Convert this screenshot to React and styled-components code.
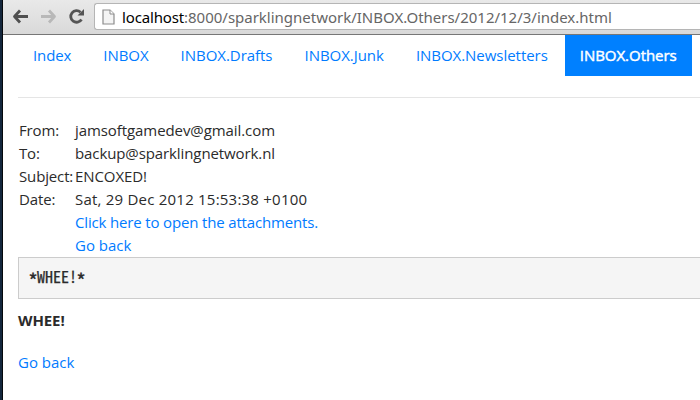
import React from "react";
import styled, { createGlobalStyle } from "styled-components";

const GlobalStyle = createGlobalStyle`
  * { box-sizing: border-box; }
  body { margin: 0; overflow: hidden; background: #fff; }
`;

const Window = styled.div`
  width: 700px;
  height: 400px;
  overflow: hidden;
  border-left: 2px solid #14263c;
  box-shadow: inset 1px 0 #05080c;
  padding-left: 1px;
  font: 15px/23px "Open Sans", sans-serif;
  color: #2b2b2b;
  background: #fff;
`;

const Toolbar = styled.header`
  display: flex;
  align-items: flex-start;
  height: 35px;
  padding: 3px 0 0 9px;
  border-bottom: 1px solid #777;
  background: linear-gradient(#e9e9e9, #d9d9d9);
`;

const ToolIcon = styled.svg`
  flex: none;
  width: 18px;
  height: 18px;
  margin: 4px 10px 0 0;
  fill: none;
  stroke: ${(p) => p.$color};
  stroke-width: 2.8;
  stroke-linejoin: round;
`;

const AddressBar = styled.div`
  display: flex;
  align-items: center;
  flex: 1;
  height: 27px;
  margin-left: -2px;
  padding-left: 7px;
  border: 1px solid #b5b5b5;
  border-right: 0;
  border-radius: 3px 0 0 3px;
  background: #fff;
`;

const PageIcon = styled.svg`
  flex: none;
  width: 13px;
  height: 16px;
  margin-right: 7px;
`;

const Url = styled.span`
  font: 15px/24px "Noto Sans", sans-serif;
  letter-spacing: ${(p) => p.$spacing};
  color: ${(p) => p.$color};
  white-space: nowrap;
`;

const Content = styled.main`
  padding-left: 15px;
`;

const Nav = styled.nav`
  display: flex;
  gap: 2px;
  height: 63px;
  border-bottom: 1px solid #e5e5e5;
`;

const NavLink = styled.a`
  height: 41px;
  padding: 0 15px;
  line-height: 41px;
  letter-spacing: -0.037px;
  white-space: nowrap;
  color: ${(p) => (p.$active ? "#fff" : "#007bff")};
  background: ${(p) => (p.$active ? "#0080ff" : "transparent")};
  -webkit-text-stroke: ${(p) => (p.$active ? "0.45px #fff" : "0")};

  &:first-child {
    letter-spacing: -0.12px;
  }
`;

const Headers = styled.div`
  display: grid;
  grid-template-columns: 56px 1fr;
  grid-auto-rows: 23px;
  padding: 21px 0 0 1px;
  white-space: nowrap;
`;

const Field = styled.span`
  letter-spacing: ${(p) => p.$spacing || "-0.14px"};
`;

const Link = styled.a`
  color: #007bff;
  grid-column: 2;
  letter-spacing: ${(p) => p.$spacing || "0"};
`;

const Message = styled.pre`
  height: 42px;
  margin: 0;
  padding: 0 10px;
  border: 1px solid #ccc;
  border-right: 0;
  background: #f5f5f5;
  font: 16px/37px "Noto Sans Mono CJK JP", "Liberation Mono", monospace;
  -webkit-text-stroke: 0.25px #2b2b2b;
`;

const Asterisk = styled.span`
  display: inline-block;
  transform: translateY(4px) scale(1.2);
  -webkit-text-stroke: 0.4px #2b2b2b;
`;

const Footer = styled.div`
  padding-top: 10px;
`;

const Strong = styled.strong`
  display: block;
  margin-bottom: 19px;
  letter-spacing: -0.1px;
`;

const folders = ["Index", "INBOX", "INBOX.Drafts", "INBOX.Junk", "INBOX.Newsletters", "INBOX.Others"];

const fields = [
  ["From:", "jamsoftgamedev@gmail.com", "-0.08px"],
  ["To:", "backup@sparklingnetwork.nl", "-0.1px"],
  ["Subject:", "ENCOXED!", "-0.08px"],
  ["Date:", "Sat, 29 Dec 2012 15:53:38 +0100", "0.22px"],
];

export default function App() {
  return (
    <Window>
      <GlobalStyle />
      <Toolbar>
        <ToolIcon $color="#505050" viewBox="0 0 18 18"><path d="M16 9.5H3M8 3.5L2.5 9.5L8 15.5" /></ToolIcon>
        <ToolIcon $color="#b8b8b8" viewBox="0 0 18 18"><path d="M1 9.5H14M9 3.5L14.5 9.5L9 15.5" /></ToolIcon>
        <ToolIcon $color="#555" viewBox="0 0 18 18">
          <path d="M13.5 12.5A5.8 5.8 0 1 1 12.5 5.2" />
          <path d="M16 2V8.5H9.5Z" fill="#555" stroke="none" />
        </ToolIcon>
        <AddressBar>
          <PageIcon viewBox="0 0 13 16">
            <path d="M1 1H8L12 5V15H1Z" fill="#f4f4f4" stroke="#8c8c8c" strokeWidth="1.2" />
            <path d="M8 1V5H12" fill="#fff" stroke="#8c8c8c" />
          </PageIcon>
          <Url $color="#000" $spacing="-0.15px">localhost</Url>
          <Url $color="#666" $spacing="-0.01px">:8000/sparklingnetwork/INBOX.Others/2012/12/3/index.html</Url>
        </AddressBar>
      </Toolbar>
      <Content>
        <Nav>
          {folders.map((name) => (
            <NavLink key={name} $active={name === "INBOX.Others"}>{name}</NavLink>
          ))}
        </Nav>
        <Headers>
          {fields.map(([label, value, spacing]) => (
            <React.Fragment key={label}>
              <Field>{label}</Field>
              <Field $spacing={spacing}>{value}</Field>
            </React.Fragment>
          ))}
          <Link $spacing="-0.16px">Click here to open the attachments.</Link>
          <Link>Go back</Link>
        </Headers>
        <Message><Asterisk>*</Asterisk>WHEE!<Asterisk>*</Asterisk></Message>
        <Footer>
          <Strong>WHEE!</Strong>
          <Link>Go back</Link>
        </Footer>
      </Content>
    </Window>
  );
}
